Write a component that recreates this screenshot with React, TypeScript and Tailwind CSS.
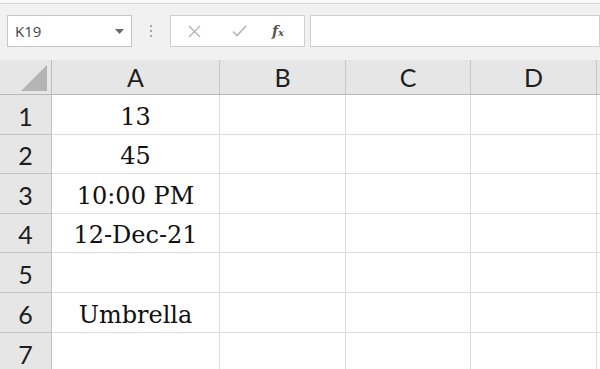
const cols = ["A", "B", "C", "D"];
const rows: { n: number; h: string; a: string }[] = [
  { n: 1, h: "h-[40px]", a: "13" },
  { n: 2, h: "h-[39px]", a: "45" },
  { n: 3, h: "h-[40px]", a: "10:00 PM" },
  { n: 4, h: "h-[39px]", a: "12-Dec-21" },
  { n: 5, h: "h-[40px]", a: "" },
  { n: 6, h: "h-[40px]", a: "Umbrella" },
  { n: 7, h: "h-[40px]", a: "" },
];

const widths = ["w-[168px]", "w-[126px]", "w-[125px]", "w-[126px]"];

export default function App() {
  return (
    <div className="h-[369px] w-[600px] overflow-hidden bg-white font-['Lato',sans-serif]">
      {/* formula bar */}
      <div className="h-[60px] border-t-[3px] border-[#f9f9f9] bg-[#f1f1f1]">
        <div className="border-t border-[#d9d9d9] pt-[11px]">
          <div className="flex h-[32px] items-stretch">
            <div className="ml-[7px] flex w-[125px] items-center justify-between border border-[#c6c6c6] bg-white pl-[7px] pr-[7px]">
              <span className="font-['Open_Sans',sans-serif] text-[15px] text-[#444]">K19</span>
              <svg width="9" height="5" viewBox="0 0 9 5">
                <path d="M0 0h9L4.5 5z" fill="#6a6a6a" />
              </svg>
            </div>
            <div className="flex w-[38px] flex-col items-center justify-center gap-[3px]">
              <span className="h-[2px] w-[2px] bg-[#a5a5a5]" />
              <span className="h-[2px] w-[2px] bg-[#a5a5a5]" />
              <span className="h-[2px] w-[2px] bg-[#a5a5a5]" />
            </div>
            <div className="flex w-[135px] items-center border border-[#d0d0d0] bg-white">
              <svg className="ml-[17px]" width="13" height="13" viewBox="0 0 13 13">
                <path d="M1 1l11 11M12 1L1 12" stroke="#b4b4b4" strokeWidth="1.4" fill="none" />
              </svg>
              <svg className="ml-[31px]" width="15" height="12" viewBox="0 0 15 12">
                <path d="M1 6.5l4 4L14 1" stroke="#b4b4b4" strokeWidth="1.6" fill="none" />
              </svg>
              <span className="ml-[25px] font-['DejaVu_Serif',serif] text-[14px] font-bold italic text-[#555]">
                f<span className="text-[10px]">x</span>
              </span>
            </div>
            <div className="ml-[5px] flex-1 border border-[#d0d0d0] bg-white" />
          </div>
        </div>
      </div>

      {/* column headers */}
      <div className="flex h-[35px] border-b border-[#b8b8b8] bg-[#e6e6e6]">
        <div className="flex w-[52px] items-end justify-end border-r border-[#bdbdbd] pb-[3px] pr-[4px]">
          <svg width="26" height="26" viewBox="0 0 26 26">
            <path d="M26 0V26H0z" fill="#b4b4b4" />
          </svg>
        </div>
        {cols.map((c, i) => (
          <div
            key={c}
            className={`${widths[i]} flex items-center justify-center border-r border-[#c8c8c8] pt-[2px] text-[25px] text-[#1e1e1e]`}
          >
            {c}
          </div>
        ))}
        <div className="flex-1" />
      </div>

      {/* rows */}
      {rows.map((r) => (
        <div key={r.n} className={`flex ${r.h}`}>
          <div className="flex w-[52px] items-center justify-center border-r border-b border-[#c2c2c2] bg-[#e6e6e6] pt-[4px] text-[25px] text-[#1e1e1e]">
            {r.n}
          </div>
          {cols.map((c, i) => (
            <div
              key={c}
              className={`${widths[i]} flex items-end justify-center border-r border-b border-[#dcdcdc] pb-[1px] font-['DejaVu_Serif',serif] text-[24px] leading-[32px] text-[#111]`}
            >
              {i === 0 ? r.a : ""}
            </div>
          ))}
          <div className="flex-1 border-b border-[#dcdcdc]" />
        </div>
      ))}
    </div>
  );
}
